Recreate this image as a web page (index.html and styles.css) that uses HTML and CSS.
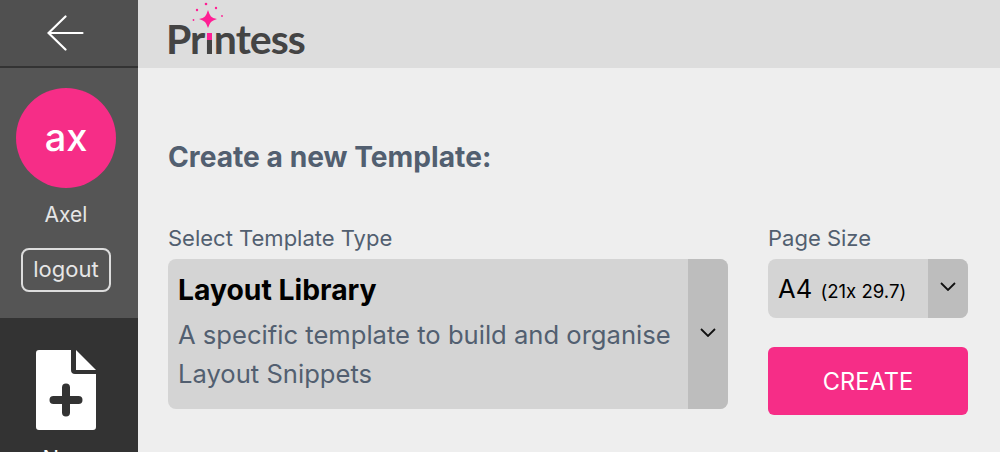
FILE: index.html
```html
<!DOCTYPE html>
<html lang="en">

<head>
  <meta charset="UTF-8">
  <meta name="viewport" content="width=device-width, initial-scale=1.0">
  <title>Create a new Template</title>
  <link rel="stylesheet" href="styles.css">
</head>

<body>
  <aside class="sidebar">
    <a class="back" href="#" aria-label="Back">
      <svg width="38" height="36" viewBox="0 0 38 36" fill="none" stroke="#fff" stroke-width="2.2" stroke-linecap="round">
        <path d="M1.5 18H35.5M18.5 1.500L1.500 18L18.500 34.500" />
      </svg>
    </a>
    <div class="user">
      <div class="avatar">ax</div>
      <div class="user__name">Axel</div>
      <button class="logout" type="button">logout</button>
    </div>
    <nav class="menu">
      <a class="menu__item" href="#">
        <svg width="60" height="80" viewBox="0 0 60 80">
          <path fill="#fff" d="M3 0H35V20Q35 24 39 24H60V77Q60 80 57 80H3Q0 80 0 77V3Q0 0 3 0Z" />
          <path fill="#fff" d="M40 0L60 20H40Z" />
          <path stroke="#333" stroke-width="8" stroke-linecap="round" d="M17.500 50H42.500M30 37.500V62.500" />
        </svg>
        <span>New</span>
      </a>
    </nav>
  </aside>

  <main class="main">
    <header class="topbar">
      <div class="logo">
        <svg class="logo__star" width="32" height="28" viewBox="0 0 32 28" fill="#ff1f94">
          <path d="M16 8Q17.500 13 19 14.500Q20.500 16 25 17Q20.500 18.500 19 20Q17.500 21.500 16 26Q14.500 21.500 13 20Q11.500 18.500 7 17Q11.500 16 13 14.500Q14.500 13 16 8Z" />
          <circle cx="14" cy="2" r="1.300" />
          <circle cx="24" cy="6" r="1.200" />
          <circle cx="5" cy="8" r="1.200" />
          <circle cx="1.500" cy="18" r="0.900" />
          <circle cx="30" cy="14" r="0.900" />
        </svg>
        Pr<span class="logo__i">ı</span>ntess
      </div>
    </header>

    <section class="content">
      <h1 class="title">Create a new Template:</h1>
      <form class="form" action="">
        <div class="field field--type">
          <label class="field__label">Select Template Type</label>
          <div class="select select--type">
            <div class="select__value">
              <strong class="select__name">Layout Library</strong>
              <p class="select__desc">A specific template to build and organise Layout Snippets</p>
            </div>
            <span class="select__arrow">
              <svg width="16" height="9" viewBox="0 0 16 9" fill="none" stroke="#111" stroke-width="1.800"><path d="M1 1L8 8L15 1" /></svg>
            </span>
          </div>
        </div>
        <div class="field field--size">
          <label class="field__label">Page Size</label>
          <div class="select select--size">
            <div class="select__value select__value--size">A4 <small>(21x 29.7)</small></div>
            <span class="select__arrow">
              <svg width="16" height="9" viewBox="0 0 16 9" fill="none" stroke="#111" stroke-width="1.800"><path d="M1 1L8 8L15 1" /></svg>
            </span>
          </div>
          <button class="create" type="button">CREATE</button>
        </div>
      </form>
    </section>
  </main>
</body>

</html>
```

FILE: styles.css
```css
html,
body {
  height: 100%;
  box-sizing: border-box;
}

body {
  display: flex;
  margin: 0;
  overflow: hidden;
  font-family: Inter, "Liberation Sans", sans-serif;
  background-color: #eee;
}

.sidebar {
  display: flex;
  flex-direction: column;
  flex: 0 0 138px;
  height: 452px;
  overflow: hidden;
  background-color: #333;
}

.back {
  display: flex;
  flex: none;
  align-items: center;
  justify-content: center;
  height: 66px;
  padding-right: 6px;
  border-bottom: 2px solid #333;
  background-color: #505050;
}

.user {
  display: flex;
  flex: none;
  flex-direction: column;
  align-items: center;
  height: 250px;
  box-sizing: border-box;
  padding: 20px 6px 0 0;
  background-color: #555;
  color: #e6e6e6;
}

.avatar {
  display: flex;
  align-items: center;
  justify-content: center;
  width: 100px;
  height: 100px;
  border-radius: 50%;
  padding-bottom: 2px;
  box-sizing: border-box;
  background-color: #f62d87;
  color: #fff;
  font-size: 38px;
  font-weight: 500;
}

.user__name {
  margin-top: 15px;
  font-size: 21px;
  line-height: 24px;
}

.logout {
  width: 90px;
  height: 44px;
  margin-top: 21px;
  padding: 0 0 2px;
  border: 2px solid #ddd;
  border-radius: 8px;
  background: none;
  color: #e6e6e6;
  font: inherit;
  font-size: 22px;
}

.menu__item {
  display: flex;
  flex-direction: column;
  align-items: center;
  padding: 32px 6px 0 0;
  color: #fff;
  font-size: 22px;
  line-height: 26px;
  text-decoration: none;
}

.menu__item span {
  margin-top: 15px;
}

.main {
  flex: 1;
  min-width: 0;
}

.topbar {
  height: 68px;
  box-sizing: border-box;
  padding-left: 28px;
  background-color: #ddd;
}

.logo {
  position: relative;
  display: inline-block;
  padding-top: 15px;
  color: #444;
  font-family: Lato, sans-serif;
  font-size: 41px;
  font-weight: 700;
  line-height: 48px;
  letter-spacing: -1px;
}

.logo__i {
  background: linear-gradient(#ff1f94 54%, #444 54%);
  -webkit-background-clip: text;
  background-clip: text;
  color: transparent;
}

.logo__star {
  position: absolute;
  top: 2px;
  left: 26px;
}

.content {
  padding: 0 32px 0 30px;
}

.title {
  margin: 71px 0 0;
  color: #525f70;
  font-size: 28.200px;
  font-weight: 700;
  line-height: 36px;
}

.form {
  display: flex;
  gap: 40px;
  margin-top: 51px;
}

.field--type {
  width: 560px;
}

.field--size {
  width: 200px;
}

.field__label {
  display: block;
  margin-bottom: 9px;
  color: #525f70;
  font-size: 22px;
  line-height: 24px;
}

.select {
  display: flex;
  overflow: hidden;
  border-radius: 8px;
  background-color: #d4d4d4;
}

.select--type {
  height: 150px;
}

.select--size {
  height: 59px;
}

.select__value {
  flex: 1;
  min-width: 0;
  padding: 13px 10px;
}

.select__name {
  display: block;
  color: #000;
  font-size: 28.300px;
  line-height: 36px;
}

.select__desc {
  margin: 7px 0 0;
  color: #525f70;
  font-size: 25.600px;
  line-height: 39px;
}

.select__value--size {
  padding: 0 10px;
  color: #000;
  font-size: 25.600px;
  line-height: 60px;
}

.select__value--size small {
  margin-left: 1px;
  font-size: 18.600px;
  font-feature-settings: "calt" 0;
}

.select__arrow {
  display: flex;
  flex: 0 0 40px;
  align-items: center;
  justify-content: center;
  padding-bottom: 4px;
  background-color: #bdbdbd;
}

.create {
  display: block;
  width: 100%;
  height: 68px;
  margin-top: 29px;
  padding: 0;
  border: 0;
  border-radius: 6px;
  background-color: #f62d87;
  color: #fff;
  font: inherit;
  font-size: 23.600px;
}
```
